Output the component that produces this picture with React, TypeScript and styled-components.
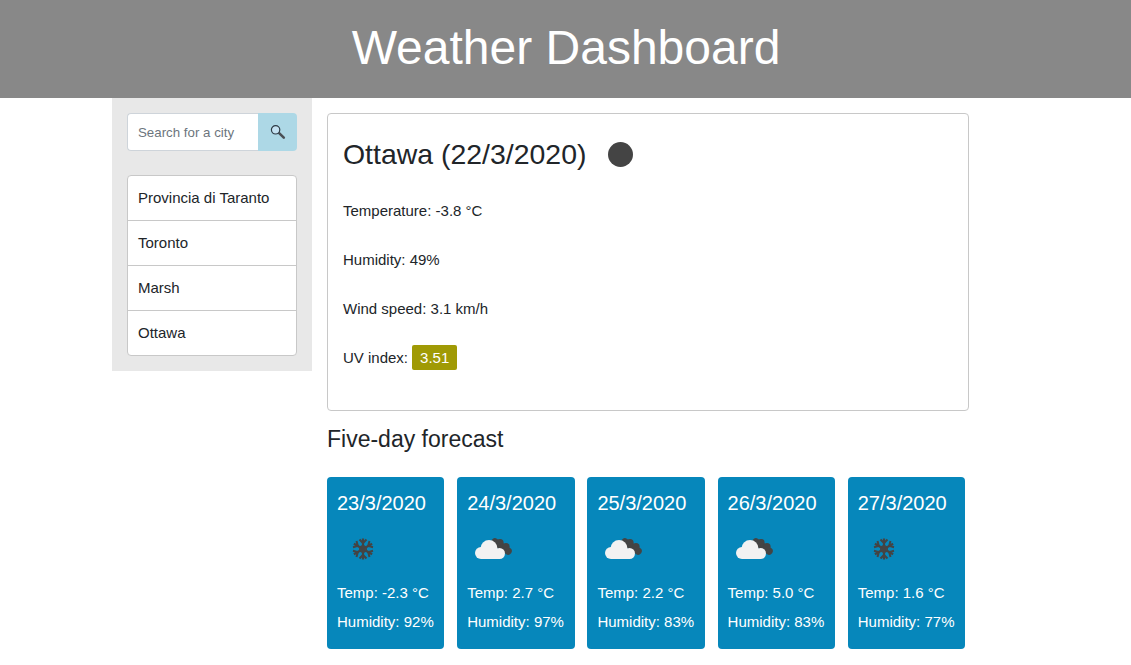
import React from 'react'
import styled, { createGlobalStyle } from 'styled-components'

const GlobalStyle = createGlobalStyle`
  * { box-sizing: border-box; }
  html, body { margin: 0; padding: 0; background: #fff; }
  body {
    font-family: "Liberation Sans", Arial, sans-serif;
    font-size: 15px;
    line-height: 1.5;
    color: #212529;
  }
`

const history = ['Provincia di Taranto', 'Toronto', 'Marsh', 'Ottawa']

type Kind = 'snow' | 'cloud'

const forecast: { date: string; temp: string; humidity: string; kind: Kind }[] = [
  { date: '23/3/2020', temp: '-2.3', humidity: '92', kind: 'snow' },
  { date: '24/3/2020', temp: '2.7', humidity: '97', kind: 'cloud' },
  { date: '25/3/2020', temp: '2.2', humidity: '83', kind: 'cloud' },
  { date: '26/3/2020', temp: '5.0', humidity: '83', kind: 'cloud' },
  { date: '27/3/2020', temp: '1.6', humidity: '77', kind: 'snow' },
]

const SearchIcon = () => (
  <svg width="16" height="16" viewBox="0 0 16 16">
    <path d="M9.4 9.4l4.4 4.2" stroke="#4a4f55" strokeWidth="2.6" strokeLinecap="round" />
    <circle cx="5.6" cy="5.8" r="4.2" fill="#c4e2f2" stroke="#2d3a44" strokeWidth="1.2" />
  </svg>
)

const SnowIcon = () => (
  <svg width="22" height="22" viewBox="0 0 22 22" fill="none" stroke="#444">
    <path d="M11 0.5v21M1.9 5.75l18.2 10.5M1.9 16.25l18.2-10.5" strokeWidth="2.2" />
    <path
      d="M7.5 1.5l3.5 3.5 3.5-3.5M7.5 20.5l3.5-3.5 3.5 3.5M1 9.2l4.8-1.3-1.3-4.8M21 9.2l-4.8-1.3 1.3-4.8M1 12.8l4.8 1.3-1.3 4.8M21 12.8l-4.8 1.3 1.3 4.8"
      strokeWidth="2"
    />
    <path d="M11 7.4l3.1 1.8v3.6L11 14.6l-3.1-1.8V9.2z" strokeWidth="1.6" />
  </svg>
)

const CloudIcon = () => (
  <svg width="38" height="24" viewBox="0 0 38 24">
    <path d="M21 5l13 9" stroke="#444" strokeWidth="7.5" strokeLinecap="round" />
    <circle cx="26" cy="5.5" r="3.6" fill="#444" />
    <circle cx="32" cy="9.5" r="3.6" fill="#444" />
    <g fill="#f2f2f2">
      <circle cx="15" cy="11.5" r="8.5" />
      <circle cx="7" cy="16" r="6" />
      <circle cx="25.5" cy="16.5" r="5.5" />
      <rect x="7" y="13" width="19" height="9" />
    </g>
  </svg>
)

export default function App() {
  return (
    <>
      <GlobalStyle />
      <Header>Weather Dashboard</Header>
      <Layout>
        <Sidebar>
          <SearchForm>
            <SearchInput placeholder="Search for a city" />
            <SearchButton type="button" aria-label="Search">
              <SearchIcon />
            </SearchButton>
          </SearchForm>
          <CityList>
            {history.map((city) => (
              <CityItem key={city}>{city}</CityItem>
            ))}
          </CityList>
        </Sidebar>
        <Main>
          <CurrentCard>
            <CityTitle>
              Ottawa (22/3/2020)
              <Dot />
            </CityTitle>
            <Stat>Temperature: -3.8 °C</Stat>
            <Stat>Humidity: 49%</Stat>
            <Stat>Wind speed: 3.1 km/h</Stat>
            <Stat>
              UV index: <UvBadge>3.51</UvBadge>
            </Stat>
          </CurrentCard>
          <ForecastTitle>Five-day forecast</ForecastTitle>
          <ForecastRow>
            {forecast.map((day) => (
              <ForecastCard key={day.date}>
                <ForecastDate>{day.date}</ForecastDate>
                <IconSlot $kind={day.kind}>
                  {day.kind === 'snow' ? <SnowIcon /> : <CloudIcon />}
                </IconSlot>
                <ForecastText>Temp: {day.temp} °C</ForecastText>
                <ForecastText>Humidity: {day.humidity}%</ForecastText>
              </ForecastCard>
            ))}
          </ForecastRow>
        </Main>
      </Layout>
    </>
  )
}

const Header = styled.header`
  height: 98px;
  padding-left: 1px;
  background: #888888;
  color: #fff;
  font-size: 48px;
  line-height: 96px;
  text-align: center;
`
const Layout = styled.div`
  display: flex;
  align-items: flex-start;
  padding-left: 112px;
`
const Sidebar = styled.aside`
  width: 200px;
  padding: 15px;
  background: #e8e8e8;
`
const SearchForm = styled.div`
  display: flex;
  height: 38px;
  margin-bottom: 24px;
`
const SearchInput = styled.input`
  flex: 1;
  min-width: 0;
  padding: 6px 10px;
  border: 1px solid #ced4da;
  border-right: 0;
  border-radius: 4px 0 0 4px;
  background: #fff;
  font-family: inherit;
  font-size: 13.3px;
  &::placeholder { color: #6c757d; opacity: 1; }
`
const SearchButton = styled.button`
  display: flex;
  align-items: center;
  justify-content: center;
  width: 39px;
  padding: 0;
  border: 0;
  border-radius: 0 4px 4px 0;
  background: #add8e6;
`
const CityList = styled.ul`
  margin: 0;
  padding: 0;
  list-style: none;
  background: #fff;
  border: 1px solid #c8c8c8;
  border-radius: 4px;
`
const CityItem = styled.li`
  height: 45px;
  padding: 0 10px;
  line-height: 44px;
  border-bottom: 1px solid #c8c8c8;
  &:last-child { border-bottom: 0; height: 44px; }
`
const Main = styled.main`
  width: 642px;
  margin-left: 15px;
  padding-top: 15px;
`
const CurrentCard = styled.section`
  height: 298px;
  padding: 15px;
  border: 1px solid #c8c8c8;
  border-radius: 4px;
`
const CityTitle = styled.h2`
  display: flex;
  align-items: center;
  height: 50px;
  margin: 0 0 20px;
  font-size: 28.45px;
  font-weight: 400;
`
const Dot = styled.span`
  width: 25px;
  height: 25px;
  margin-left: 22px;
  border-radius: 50%;
  background: #444;
`
const Stat = styled.p`
  display: flex;
  align-items: center;
  gap: 4px;
  height: 25px;
  margin: 0 0 24px;
`
const UvBadge = styled.span`
  margin-top: -2px;
  padding: 0 8px;
  line-height: 25px;
  border-radius: 2px;
  background: #a09a05;
  color: #fff;
`
const ForecastTitle = styled.h3`
  margin: 12px 0 22px;
  font-size: 23px;
  font-weight: 400;
  line-height: 32px;
`
const ForecastRow = styled.div`
  display: flex;
  gap: 12.8px;
`
const ForecastCard = styled.article`
  width: 117.4px;
  height: 172px;
  padding: 12px 10px;
  border-radius: 4px;
  background: #0687bb;
  color: #fff;
`
const ForecastDate = styled.div`
  font-size: 20px;
  line-height: 28px;
`
const IconSlot = styled.div<{ $kind: Kind }>`
  display: flex;
  align-items: center;
  height: 40px;
  margin: 12px 0 9px;
  padding-left: ${(p) => (p.$kind === 'snow' ? '15px' : '7px')};
`
const ForecastText = styled.div`
  line-height: 29px;
`
